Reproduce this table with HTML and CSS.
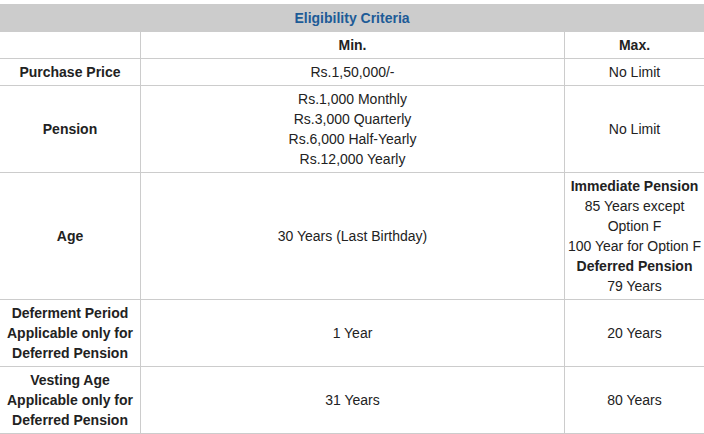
FILE: index.html
```html
<!DOCTYPE html>
<html lang="en">
<head>
<meta charset="utf-8">
<title>Eligibility Criteria</title>
<link rel="stylesheet" href="styles.css">
</head>
<body>
<div class="wrap">
<table class="criteria">
  <colgroup>
    <col class="c-label">
    <col class="c-min">
    <col class="c-max">
  </colgroup>
  <thead>
    <tr><th class="title" colspan="3">Eligibility Criteria</th></tr>
  </thead>
  <tbody>
    <tr><td class="label"></td><td class="head">Min.</td><td class="head last">Max.</td></tr>
    <tr><td class="label">Purchase Price</td><td>Rs.1,50,000/-</td><td class="last">No Limit</td></tr>
    <tr>
      <td class="label">Pension</td>
      <td><div>Rs.1,000 Monthly</div><div>Rs.3,000 Quarterly</div><div>Rs.6,000 Half-Yearly</div><div>Rs.12,000 Yearly</div></td>
      <td class="last">No Limit</td>
    </tr>
    <tr>
      <td class="label">Age</td>
      <td>30 Years (Last Birthday)</td>
      <td class="last"><div class="b">Immediate Pension</div><div>85 Years except</div><div>Option F</div><div class="nw">100 Year for Option F</div><div class="b">Deferred Pension</div><div>79 Years</div></td>
    </tr>
    <tr>
      <td class="label"><div>Deferment Period</div><div>Applicable only for</div><div>Deferred Pension</div></td>
      <td>1 Year</td>
      <td class="last">20 Years</td>
    </tr>
    <tr>
      <td class="label"><div>Vesting Age</div><div>Applicable only for</div><div>Deferred Pension</div></td>
      <td>31 Years</td>
      <td class="last">80 Years</td>
    </tr>
  </tbody>
</table>
</div>
</body>
</html>
```
FILE: styles.css
```css
html, body {
  margin: 0;
  padding: 0;
  background: #ffffff;
}
.wrap {
  padding-top: 4px;
}
.criteria {
  width: 704px;
  table-layout: fixed;
  border-collapse: separate;
  border-spacing: 0;
  font-family: Arial, "Liberation Sans", sans-serif;
  font-size: 14px;
  line-height: 20px;
  color: #222222;
}
.c-label { width: 141px; }
.c-min { width: 424px; }
.c-max { width: 139px; }
.criteria th.title {
  background: #cccccc;
  color: #1d5b97;
  font-weight: bold;
  text-align: center;
  padding: 4px 0;
}
.criteria td {
  padding: 3px 0;
  text-align: center;
  vertical-align: middle;
  border-bottom: 1px solid #cccccc;
  border-right: 1px solid #cccccc;
}
.criteria td.last {
  border-right: none;
}
.criteria td.label,
.criteria td.head,
.criteria .b {
  font-weight: bold;
}
.criteria .nw {
  white-space: nowrap;
}
```
